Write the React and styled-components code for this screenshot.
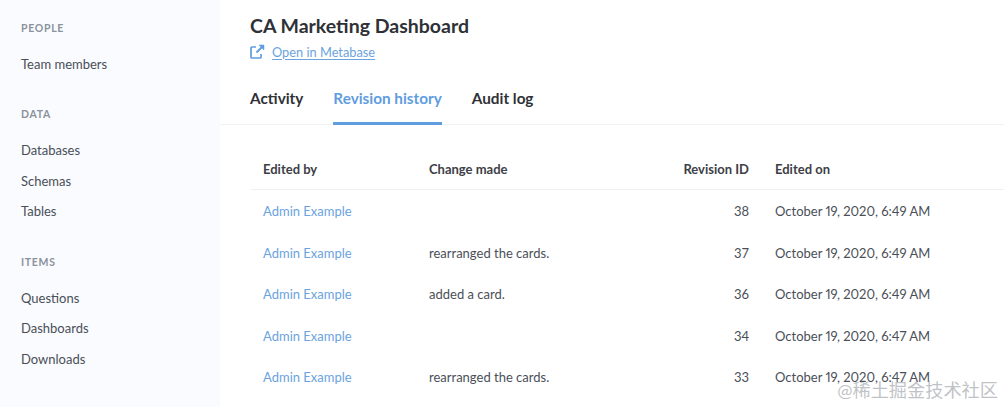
import React from 'react';
import styled, { createGlobalStyle } from 'styled-components';

const GlobalStyle = createGlobalStyle`
  html, body {
    margin: 0;
    padding: 0;
    height: 100%;
    overflow: hidden;
    background: #fff;
    font-family: Lato, "Noto Sans CJK SC", sans-serif;
    color: #4c5773;
  }
`;

const Page = styled.div`
  position: relative;
  display: flex;
  width: 1004px;
  height: 407px;
  overflow: hidden;
`;

const Sidebar = styled.nav`
  flex: 0 0 220px;
  box-sizing: border-box;
  padding: 20.7px 0 0 21px;
  background: #f9fbfe;
`;

const SideGroup = styled.div`
  margin-bottom: 21px;
`;

const SideLabel = styled.div`
  height: 14px;
  margin-bottom: 21px;
  font-size: 10.5px;
  line-height: 14px;
  font-weight: 700;
  letter-spacing: 0.7px;
  color: #8b929c;
`;

const SideItem = styled.div`
  height: 30.5px;
  font-size: 13px;
  line-height: 16px;
  color: #4a4f57;
`;

const Main = styled.main`
  flex: 1;
  min-width: 0;
`;

const Header = styled.header`
  padding: 13px 0 0 30px;
`;

const Title = styled.h1`
  margin: 0;
  font-size: 19.5px;
  line-height: 26px;
  font-weight: 700;
  color: #2e3136;
`;

const OpenLink = styled.a`
  display: flex;
  align-items: center;
  gap: 7px;
  height: 17px;
  margin-top: 4px;
  font-size: 12.8px;
  color: #6ba3e0;
  text-decoration: underline;
  text-underline-offset: 2px;
`;

const Tabs = styled.div`
  display: flex;
  gap: 30px;
  height: 65px;
  padding-left: 30px;
  border-bottom: 1px solid #f0f2f5;
  box-sizing: border-box;
`;

const Tab = styled.div`
  box-sizing: border-box;
  height: 65px;
  padding-top: 28px;
  font-size: 15.3px;
  line-height: 20px;
  font-weight: 700;
  color: ${({ $active }) => ($active ? '#5f9de0' : '#2e3136')};
  border-bottom: 3px solid ${({ $active }) => ($active ? '#5f9de0' : 'transparent')};
`;

const TableWrap = styled.div`
  padding: 24.4px 0 0 31px;
`;

const Row = styled.div`
  display: grid;
  grid-template-columns: 166px 220px 100px 1fr;
  align-items: center;
  box-sizing: border-box;
  height: ${({ $head }) => ($head ? '41px' : '41.5px')};
  padding-left: 12px;
  font-size: 13px;
  color: #4a4f57;
  ${({ $head }) => $head && `
    font-weight: 700;
    color: #3d4047;
    border-bottom: 1px solid #eef0f3;
  `}
`;

const Revision = styled.span`
  text-align: right;
`;

const EditedOn = styled.span`
  padding-left: 26px;
  font-variant-numeric: proportional-nums;
`;

const Editor = styled.span`
  color: #6ba3e0;
`;

const Watermark = styled.div`
  position: absolute;
  right: 6px;
  bottom: 6px;
  font-size: 18.2px;
  line-height: 22px;
  color: rgba(170, 174, 180, 0.75);
`;

const sections = [
  { label: 'PEOPLE', items: ['Team members'] },
  { label: 'DATA', items: ['Databases', 'Schemas', 'Tables'] },
  { label: 'ITEMS', items: ['Questions', 'Dashboards', 'Downloads'] },
];

const revisions = [
  { change: '', id: 38, time: '6:49 AM' },
  { change: 'rearranged the cards.', id: 37, time: '6:49 AM' },
  { change: 'added a card.', id: 36, time: '6:49 AM' },
  { change: '', id: 34, time: '6:47 AM' },
  { change: 'rearranged the cards.', id: 33, time: '6:47 AM' },
];

const ExternalIcon = () => (
  <svg width="15" height="15" viewBox="0 0 15 15" fill="none" stroke="#5f9de0" strokeWidth="1.7">
    <path d="M6 3H2a1 1 0 0 0-1 1v9a1 1 0 0 0 1 1h8a1 1 0 0 0 1-1v-3" />
    <path d="M6.5 8.5 12.5 2.5" strokeWidth="2" />
    <path d="M9 1h5v5z" fill="#5f9de0" strokeWidth="0.5" />
  </svg>
);

const App = () => (
  <Page>
    <GlobalStyle />
    <Sidebar>
      {sections.map((section) => (
        <SideGroup key={section.label}>
          <SideLabel>{section.label}</SideLabel>
          {section.items.map((item) => (
            <SideItem key={item}>{item}</SideItem>
          ))}
        </SideGroup>
      ))}
    </Sidebar>
    <Main>
      <Header>
        <Title>CA Marketing Dashboard</Title>
        <OpenLink>
          <ExternalIcon />
          <span>Open in Metabase</span>
        </OpenLink>
      </Header>
      <Tabs>
        <Tab>Activity</Tab>
        <Tab $active>Revision history</Tab>
        <Tab>Audit log</Tab>
      </Tabs>
      <TableWrap>
        <Row $head>
          <span>Edited by</span>
          <span>Change made</span>
          <Revision>Revision ID</Revision>
          <EditedOn>Edited on</EditedOn>
        </Row>
        {revisions.map((rev) => (
          <Row key={rev.id}>
            <Editor>Admin Example</Editor>
            <span>{rev.change}</span>
            <Revision>{rev.id}</Revision>
            <EditedOn>October 19, 2020, {rev.time}</EditedOn>
          </Row>
        ))}
      </TableWrap>
    </Main>
    <Watermark>@稀土掘金技术社区</Watermark>
  </Page>
);

export default App;
